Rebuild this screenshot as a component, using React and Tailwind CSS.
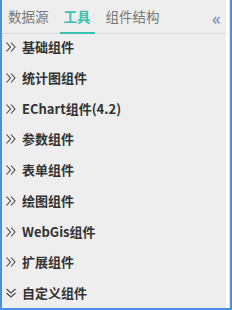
import React, { useState } from 'react'

const groups = ['基础组件', '统计图组件', 'EChart组件(4.2)', '参数组件', '表单组件', '绘图组件', 'WebGis组件', '扩展组件', '自定义组件']
const tabs = ['数据源', '工具', '组件结构']

function Chevrons({ open }) {
  return (
    <svg width="12" height="12" viewBox="0 0 12 12" className="shrink-0 text-[#444]" fill="none" stroke="currentColor" strokeWidth="1.1">
      {open ? (
        <g>
          <path d="M1.5 2 L6 6 L10.5 2" />
          <path d="M1.5 6 L6 10 L10.5 6" />
        </g>
      ) : (
        <g>
          <path d="M1.5 1.5 L5.5 6 L1.5 10.5" />
          <path d="M6 1.5 L10 6 L6 10.5" />
        </g>
      )}
    </svg>
  )
}

export default function App() {
  const [active, setActive] = useState(1)

  return (
    <div className="w-[232px] h-[310px] bg-[#eeeeee] border-x-2 border-b-2 border-[#4a90e2] flex overflow-hidden" style={{ fontFamily: '"Noto Sans CJK SC", "Liberation Sans", sans-serif' }}>
      <div className="flex-1 flex flex-col">
        <div className="h-[34px] flex items-end border-b border-[#dcdcdc] relative pl-[1px]">
          {tabs.map((t, i) => (
            <div
              key={t}
              onClick={() => setActive(i)}
              className={
                i === active
                  ? 'h-[33px] px-[4px] mx-[6px] flex items-center text-[13.5px] font-bold text-[#3cbfae] border-b-2 border-[#3cbfae] -mb-px'
                  : 'h-[33px] px-[4px] mx-[1px] flex items-center text-[13.5px] text-[#777777]'
              }
            >
              {t}
            </div>
          ))}
          <span className="absolute right-[5px] top-[5px] text-[17px] font-bold text-[#7a93b8]">«</span>
        </div>
        <div className="flex flex-col">
          {groups.map((g, i) => (
            <div key={g} className="h-[30.75px] flex items-start pt-[4px] pl-[3px] gap-[5px]">
              <div className="h-[18px] flex items-center">
                <Chevrons open={i === groups.length - 1} />
              </div>
              <span className="text-[13px] leading-[18px] font-bold text-[#333333]">{g}</span>
            </div>
          ))}
        </div>
      </div>
      <div className="w-[4px] flex">
        <div className="w-[3px] bg-white" />
        <div className="w-[1px] bg-[#e4e4e4]" />
      </div>
    </div>
  )
}
